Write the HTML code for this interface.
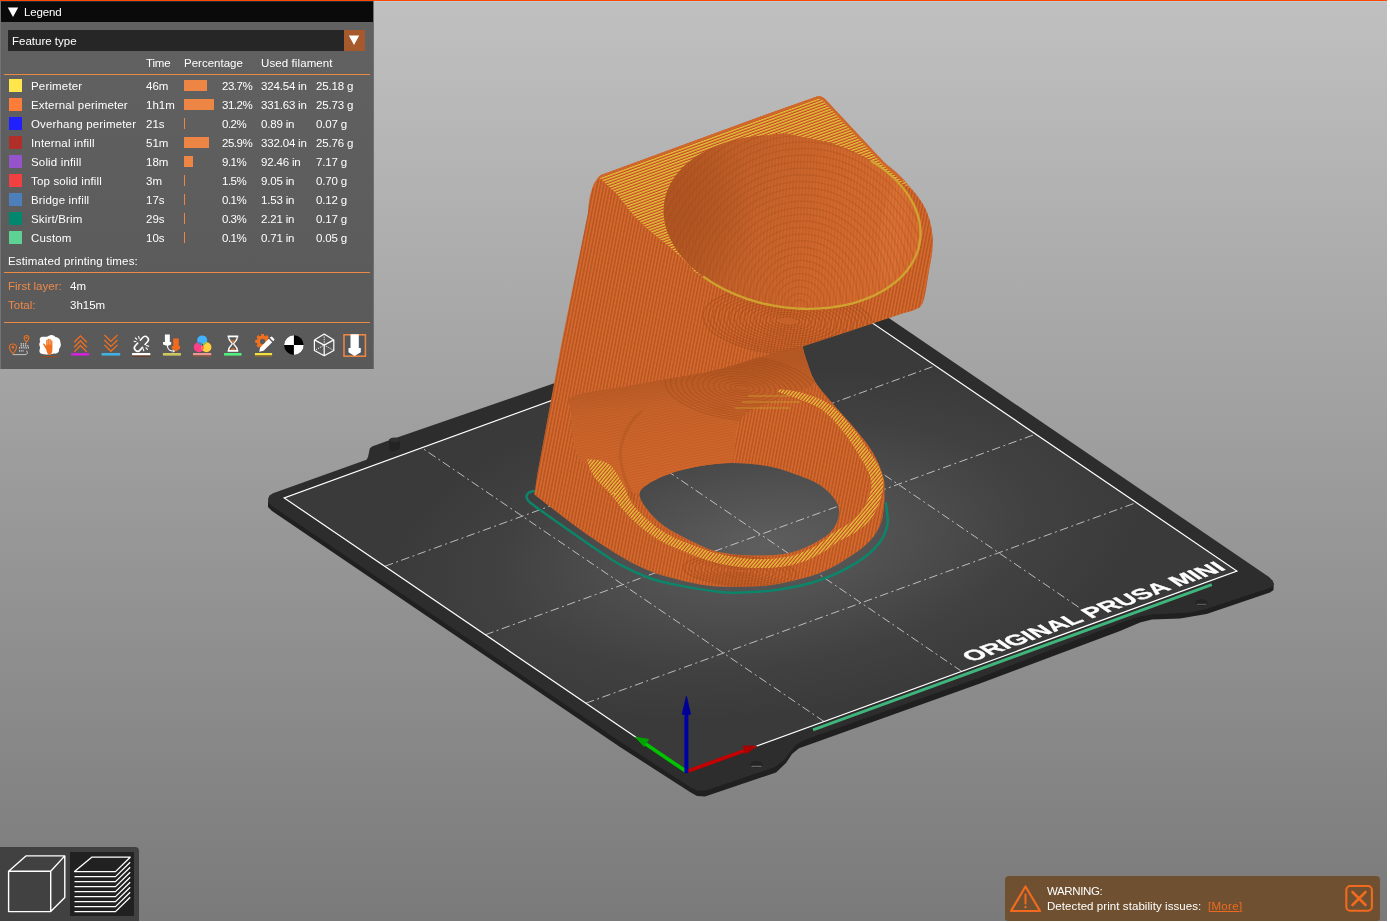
<!DOCTYPE html>
<html><head><meta charset="utf-8"><title>PrusaSlicer preview</title>
<style>
html,body{margin:0;padding:0;background:#fff;}
body{width:1390px;height:922px;overflow:hidden;position:relative;font-family:"Liberation Sans",sans-serif;font-size:12px;color:#fff;}
#canvas{position:absolute;left:0;top:0;width:1387px;height:921px;overflow:hidden;background:linear-gradient(to bottom,#c0c0c0 0%,#7a7a7a 100%);}
#topbar{position:absolute;left:0;top:0;width:1387px;height:1px;background:#ff4800;}
#topbar2{position:absolute;left:374px;top:1px;width:1013px;height:1px;background:#c3ccd2;}
svg{position:absolute;left:0;top:0;}

#legend{position:absolute;left:0;top:1px;width:374px;height:368px;background:linear-gradient(to bottom,#626262,#595959);box-sizing:border-box;border-left:1px solid #72727c;border-right:1px solid #6e6e74;}
#legend .t{position:absolute;white-space:nowrap;line-height:14px;font-size:11.5px;will-change:transform;}
#legend .l{letter-spacing:0.16px;}
#legend .p{letter-spacing:-0.5px;}
#ltitle{position:absolute;left:0;top:0;width:372px;height:21px;background:#0a0a0a;border-top:1px solid #1c2a36;box-sizing:border-box;}
#combo{position:absolute;left:7px;top:29px;width:336px;height:21px;background:#262626;}
#combobtn{position:absolute;left:343px;top:29px;width:21px;height:21px;background:#a5592c;}
.sep{position:absolute;left:3px;width:366px;height:1px;background:#ec8a45;}
.sw{position:absolute;left:8px;width:13px;height:13px;}
.bar{position:absolute;left:183px;height:11px;background:#ed8545;}
.o{color:#ed8a4a;}
#legend .n{letter-spacing:-0.18px;}


#views{position:absolute;left:0;top:847px;width:139px;height:75px;background:#414141;border-top-right-radius:4px;}
#viewsel{position:absolute;left:70px;top:5px;width:64px;height:64px;background:#212121;}
#warn{position:absolute;left:1005px;top:876px;width:375px;height:44.5px;background:#6f5132;border-radius:4px 4px 3px 3px;}
#warn .t{position:absolute;white-space:nowrap;line-height:14px;font-size:11.5px;will-change:transform;}

</style></head><body>
<div id="canvas">
<svg width="1387" height="921" viewBox="0 0 1387 921">
<defs>
<radialGradient id="bedg" gradientUnits="userSpaceOnUse" cx="0" cy="0" r="1" gradientTransform="matrix(330,-120,-190,-130,765,545)">
<stop offset="0" stop-color="#5e5e5e"/><stop offset="0.35" stop-color="#505050"/><stop offset="0.7" stop-color="#414141"/><stop offset="1" stop-color="#3a3a3a"/>
</radialGradient>
<linearGradient id="bowlg" gradientUnits="userSpaceOnUse" x1="665" y1="200" x2="920" y2="250">
<stop offset="0" stop-color="#b85a25"/><stop offset="0.3" stop-color="#c6622a"/><stop offset="0.75" stop-color="#d66b2f"/><stop offset="1" stop-color="#dc7033"/>
</linearGradient>
<linearGradient id="wallg" gradientUnits="userSpaceOnUse" x1="540" y1="350" x2="700" y2="380">
<stop offset="0" stop-color="#d96c2d"/><stop offset="1" stop-color="#d0672b"/>
</linearGradient>
<pattern id="vstripe" width="3.2" height="8" patternUnits="userSpaceOnUse" patternTransform="rotate(11)"><rect x="0" width="1.5" height="8" fill="#a9501f" opacity="0.72"/></pattern>
<pattern id="cstripe" width="8" height="2.6" patternUnits="userSpaceOnUse" patternTransform="rotate(-12)"><rect y="0" width="8" height="1.2" fill="#a9501f" opacity="0.4"/></pattern>
<pattern id="bstripe" width="3.2" height="8" patternUnits="userSpaceOnUse" patternTransform="rotate(4)"><rect x="0" width="1.4" height="8" fill="#a04c1c" opacity="0.28"/></pattern>
<pattern id="hatch" width="6" height="2.7" patternUnits="userSpaceOnUse" patternTransform="rotate(-20)"><rect width="6" height="2.7" fill="#d96a28"/><rect y="0" width="6" height="1.25" fill="#dccb38"/><rect y="1.9" width="6" height="0.8" fill="#c63a2c"/></pattern>
<pattern id="hatch2" width="6" height="2.7" patternUnits="userSpaceOnUse" patternTransform="rotate(-50)"><rect width="6" height="2.7" fill="#d96a28"/><rect y="0" width="6" height="1.3" fill="#e0d03a"/><rect y="1.9" width="6" height="0.8" fill="#c63a2c"/></pattern>
<linearGradient id="concg" gradientUnits="userSpaceOnUse" x1="690" y1="370" x2="700" y2="470">
<stop offset="0" stop-color="#b55823"/><stop offset="0.35" stop-color="#c8632a"/><stop offset="1" stop-color="#d2672c"/></linearGradient>
<radialGradient id="bdark"><stop offset="0" stop-color="#a04c1c" stop-opacity="0.45"/><stop offset="0.6" stop-color="#a04c1c" stop-opacity="0.25"/><stop offset="1" stop-color="#a04c1c" stop-opacity="0"/></radialGradient>
</defs>
<path d="M268.0,501.0 L268.0,507.0 L272.0,511.0 L620.0,747.0 L690.0,792.0 L697.0,796.0 L705.0,796.5 L776.0,772.5 L786.0,763.0 L792.0,754.0 L799.0,748.3 L980.0,683.4 L1120.0,631.0 L1140.0,622.5 L1152.0,619.5 L1180.0,618.4 L1206.6,614.0 L1270.0,592.5 L1273.5,590.0 L1273.7,583.0 L1000.0,560.0 L600.0,700.0Z" fill="#202020"/>
<path d="M268.5,503.0 L268.0,499.0 L269.5,495.5 L273.0,493.2 L366.5,459.8 L368.0,457.0 L369.8,448.6 L372.0,446.6 L388.5,440.4 L553.5,383.5 L835.2,281.4 L1269.0,577.0 L1273.0,581.0 L1273.7,584.5 L1272.0,587.0 L1268.0,588.5 L1206.0,609.0 L1190.0,612.5 L1152.0,614.5 L1140.0,616.5 L1120.0,623.0 L980.0,677.6 L805.0,739.7 L797.0,744.0 L791.0,751.0 L784.0,760.0 L775.0,767.0 L706.0,790.5 L698.0,790.8 L690.0,787.0 L620.0,741.5 L272.0,506.0Z" fill="#2d2d2d"/>
<path d="M389.2,443.9 L389.2,439.5 Q394.5,436.3 400,439.7 L400,448.2 Q394.5,452.6 389.2,450.4 Z" fill="#242424"/>
<ellipse cx="394.6" cy="439.9" rx="5.4" ry="2.3" fill="#2f2f2f"/>
<ellipse cx="756.4" cy="764.4" rx="6.3" ry="3.4" fill="#242424"/><path d="M751.5,766.3 H761.5" stroke="#777" stroke-width="1"/>
<ellipse cx="1201.5" cy="602.5" rx="6" ry="3.3" fill="#242424"/><path d="M1197,604.3 H1206" stroke="#666" stroke-width="1"/>
<path d="M686.4,771.6 L1236.9,571.0 L834.7,297.3 L284.2,497.9Z" fill="url(#bedg)"/>
<path d="M824.0,721.5 L421.8,447.8 M585.9,703.2 L1136.4,502.6 M961.6,671.3 L559.5,397.6 M485.3,634.8 L1035.8,434.1 M1078.7,607.2 L697.1,347.5 M384.8,566.3 L935.3,365.7" stroke="#d8d8d8" stroke-width="1" stroke-dasharray="8.6 3.4 2 3.4" fill="none" opacity="0.8"/>
<path d="M686.4,771.6 L1236.9,571.0 L834.7,297.3 L284.2,497.9Z" fill="none" stroke="#ffffff" stroke-width="1.2"/>
<path d="M813.0,729.9 L1211.8,584.6" stroke="#3fb57c" stroke-width="3.1"/>
<g style="filter:blur(0.35px)"><text transform="matrix(3.0583,-1.1144,2.2791,1.5510,971.5,662.3)" font-family="Liberation Sans, sans-serif" font-weight="bold" font-size="7.6" fill="#ffffff" stroke="#ffffff" stroke-width="0.14" >ORIGINAL PRUSA MINI</text></g>
<path d="M534.0,491.0 C533.2,491.3 530.2,491.7 529.0,492.6 C527.8,493.5 526.6,495.1 526.5,496.5 C526.4,497.9 527.2,499.5 528.5,501.0 C529.8,502.5 530.6,503.0 534.0,505.5 C537.4,508.0 539.2,509.4 548.9,516.2 C558.6,523.0 580.2,538.3 592.2,546.5 C604.2,554.7 611.4,559.9 621.0,565.2 C630.6,570.5 640.3,574.8 649.9,578.2 C659.5,581.6 667.9,583.2 678.7,585.4 C689.5,587.6 705.5,590.0 714.8,591.2 C724.1,592.4 723.9,592.9 734.4,592.7 C744.9,592.5 763.3,592.0 777.7,589.8 C792.1,587.6 807.8,584.3 821.0,579.7 C834.2,575.1 847.4,568.4 857.0,562.4 C866.6,556.4 873.6,549.9 878.7,543.6 C883.8,537.3 886.2,531.5 887.4,524.8 C888.6,518.1 886.2,506.8 886.0,503.2" fill="none" stroke="#0d856a" stroke-width="2.5" stroke-linecap="round"/>
<clipPath id="mclip"><path d="M534.4,494.5 L537.6,473 L562.1,340 L588,213 Q589,186 600.4,175.2 L760,116.8 L817,96.6 Q821.5,95.2 825,99 L884.3,162.4  C887.6,165.3 897.0,172.2 903.9,180.0 C910.8,187.8 920.7,198.8 925.5,208.9 C930.3,219.0 932.3,229.8 932.8,240.6 C933.3,251.4 930.1,263.4 928.4,273.8 C926.7,284.2 925.1,296.7 922.7,302.7 C920.3,308.7 917.1,308.3 914.0,310.0 C910.9,311.7 905.6,312.5 903.9,313.0 L850,331 L802.5,346.6  C803.1,348.8 804.3,354.2 806.4,360.0 C808.5,365.8 810.7,374.4 815.0,381.6 C819.3,388.8 825.7,395.4 832.4,403.3 C839.1,411.2 848.7,421.1 855.4,429.3 C862.1,437.5 868.2,444.7 872.8,452.4 C877.4,460.1 880.9,468.9 882.9,475.4 C884.9,481.9 884.4,485.8 884.5,491.6 C884.6,497.4 884.2,504.5 883.5,510.0 C882.8,515.5 882.5,519.7 880.2,524.8 C878.0,529.9 875.0,535.4 870.0,540.7 C865.0,546.0 858.1,551.3 849.9,556.6 C841.7,561.9 833.0,567.9 821.0,572.5 C809.0,577.1 791.2,581.6 777.7,584.0 C764.2,586.4 751.7,586.6 740.0,586.8 C728.3,587.0 717.8,586.6 707.6,585.4 C697.4,584.2 688.3,582.1 678.7,579.7 C669.1,577.3 659.5,574.9 649.9,571.0 C640.3,567.1 633.0,563.8 621.0,556.6 C609.0,549.4 592.1,538.1 577.7,527.7 C563.3,517.4 541.6,500.0 534.4,494.5Z M731.1,463.0 C720.3,463.1 709.5,464.5 699.4,466.2 C689.3,467.9 678.9,470.5 670.5,473.4 C662.1,476.3 654.1,480.1 648.9,483.5 C643.7,486.9 639.9,489.4 639.5,493.6 C639.1,497.8 642.5,503.1 646.5,508.5 C650.5,513.9 656.1,520.3 663.8,525.8 C671.5,531.3 683.5,537.3 692.7,541.7 C701.9,546.1 708.5,549.7 719.0,552.0 C729.5,554.3 743.8,555.6 756.0,555.6 C768.2,555.6 781.4,555.0 792.2,552.3 C803.0,549.6 814.0,543.4 821.0,539.3 C828.0,535.2 831.0,532.0 834.0,527.7 C837.0,523.4 838.8,517.9 839.0,513.3 C839.2,508.7 838.6,505.0 835.4,500.3 C832.2,495.6 827.0,489.5 820.0,485.0 C813.0,480.5 802.5,476.6 793.2,473.4 C783.9,470.1 774.6,467.2 764.3,465.5 C753.9,463.8 741.9,462.9 731.1,463.0Z" clip-rule="evenodd"/></clipPath>
<path d="M534.4,494.5 L537.6,473 L562.1,340 L588,213 Q589,186 600.4,175.2 L760,116.8 L817,96.6 Q821.5,95.2 825,99 L884.3,162.4  C887.6,165.3 897.0,172.2 903.9,180.0 C910.8,187.8 920.7,198.8 925.5,208.9 C930.3,219.0 932.3,229.8 932.8,240.6 C933.3,251.4 930.1,263.4 928.4,273.8 C926.7,284.2 925.1,296.7 922.7,302.7 C920.3,308.7 917.1,308.3 914.0,310.0 C910.9,311.7 905.6,312.5 903.9,313.0 L850,331 L802.5,346.6  C803.1,348.8 804.3,354.2 806.4,360.0 C808.5,365.8 810.7,374.4 815.0,381.6 C819.3,388.8 825.7,395.4 832.4,403.3 C839.1,411.2 848.7,421.1 855.4,429.3 C862.1,437.5 868.2,444.7 872.8,452.4 C877.4,460.1 880.9,468.9 882.9,475.4 C884.9,481.9 884.4,485.8 884.5,491.6 C884.6,497.4 884.2,504.5 883.5,510.0 C882.8,515.5 882.5,519.7 880.2,524.8 C878.0,529.9 875.0,535.4 870.0,540.7 C865.0,546.0 858.1,551.3 849.9,556.6 C841.7,561.9 833.0,567.9 821.0,572.5 C809.0,577.1 791.2,581.6 777.7,584.0 C764.2,586.4 751.7,586.6 740.0,586.8 C728.3,587.0 717.8,586.6 707.6,585.4 C697.4,584.2 688.3,582.1 678.7,579.7 C669.1,577.3 659.5,574.9 649.9,571.0 C640.3,567.1 633.0,563.8 621.0,556.6 C609.0,549.4 592.1,538.1 577.7,527.7 C563.3,517.4 541.6,500.0 534.4,494.5Z M731.1,463.0 C720.3,463.1 709.5,464.5 699.4,466.2 C689.3,467.9 678.9,470.5 670.5,473.4 C662.1,476.3 654.1,480.1 648.9,483.5 C643.7,486.9 639.9,489.4 639.5,493.6 C639.1,497.8 642.5,503.1 646.5,508.5 C650.5,513.9 656.1,520.3 663.8,525.8 C671.5,531.3 683.5,537.3 692.7,541.7 C701.9,546.1 708.5,549.7 719.0,552.0 C729.5,554.3 743.8,555.6 756.0,555.6 C768.2,555.6 781.4,555.0 792.2,552.3 C803.0,549.6 814.0,543.4 821.0,539.3 C828.0,535.2 831.0,532.0 834.0,527.7 C837.0,523.4 838.8,517.9 839.0,513.3 C839.2,508.7 838.6,505.0 835.4,500.3 C832.2,495.6 827.0,489.5 820.0,485.0 C813.0,480.5 802.5,476.6 793.2,473.4 C783.9,470.1 774.6,467.2 764.3,465.5 C753.9,463.8 741.9,462.9 731.1,463.0Z" fill="#d6682d" fill-rule="evenodd"/>
<g clip-path="url(#mclip)">
<rect x="520" y="90" width="430" height="510" fill="url(#vstripe)"/>
<path d="M573.2,396.3 C582.5,392.0 608.1,389.6 626.6,386.2 C645.1,382.8 668.7,379.0 684.3,376.1 C699.9,373.2 707.8,372.1 720.4,368.9 C733.0,365.7 746.4,360.7 760.0,357.0 C773.6,353.3 794.3,346.3 802.0,346.8 C809.7,347.3 804.2,354.2 806.4,360.0 C808.6,365.8 816.1,376.3 815.0,381.6 C813.9,386.9 806.7,388.9 800.0,392.0 C793.3,395.1 785.0,395.3 775.0,400.0 C765.0,404.7 747.3,409.5 740.0,420.0 C732.7,430.5 737.8,455.3 731.0,463.0 C724.2,470.7 709.5,464.5 699.4,466.2 C689.3,467.9 678.9,470.5 670.5,473.4 C662.1,476.3 654.1,480.1 648.9,483.5 C643.7,486.9 644.3,493.2 639.5,493.6 C634.7,494.0 626.6,490.3 620.0,486.0 C613.4,481.7 606.1,471.9 600.0,468.0 C593.9,464.1 587.8,467.2 583.3,462.7 C578.8,458.2 575.0,449.4 573.0,441.0 C571.0,432.6 571.0,419.4 571.0,412.0 C571.0,404.6 563.9,400.6 573.2,396.3Z" fill="url(#concg)"/>
<path d="M573.2,396.3 C582.5,392.0 608.1,389.6 626.6,386.2 C645.1,382.8 668.7,379.0 684.3,376.1 C699.9,373.2 707.8,372.1 720.4,368.9 C733.0,365.7 746.4,360.7 760.0,357.0 C773.6,353.3 794.3,346.3 802.0,346.8 C809.7,347.3 804.2,354.2 806.4,360.0 C808.6,365.8 816.1,376.3 815.0,381.6 C813.9,386.9 806.7,388.9 800.0,392.0 C793.3,395.1 785.0,395.3 775.0,400.0 C765.0,404.7 747.3,409.5 740.0,420.0 C732.7,430.5 737.8,455.3 731.0,463.0 C724.2,470.7 709.5,464.5 699.4,466.2 C689.3,467.9 678.9,470.5 670.5,473.4 C662.1,476.3 654.1,480.1 648.9,483.5 C643.7,486.9 644.3,493.2 639.5,493.6 C634.7,494.0 626.6,490.3 620.0,486.0 C613.4,481.7 606.1,471.9 600.0,468.0 C593.9,464.1 587.8,467.2 583.3,462.7 C578.8,458.2 575.0,449.4 573.0,441.0 C571.0,432.6 571.0,419.4 571.0,412.0 C571.0,404.6 563.9,400.6 573.2,396.3Z" fill="url(#cstripe)" opacity="0.8"/>
<path d="M641.2,411.6 C630,420 621,438 620.3,452.2 C620,465 625,481 634.2,499.8" fill="none" stroke="#a04e1d" stroke-width="3" opacity="0.3" stroke-linecap="round"/>
<clipPath id="underclip"><path d="M705,277.5 L640,300 L600,392 L626.6,386.2 L684.3,376.1 L720.4,368.9 L760,357 L802,346.8 L850,331 L903.9,313 L935,300 L935,200 L921,223 L917,255 L901,280 L863,300 L801,309.5 L743,299.5 Z"/></clipPath>
<g clip-path="url(#underclip)"><g fill="none" stroke="#9c4818" stroke-width="1.25" opacity="0.42"><ellipse cx="788" cy="321" rx="7.0" ry="2.2" transform="rotate(4 788 321)"/><ellipse cx="788" cy="321" rx="12.2" ry="4.3" transform="rotate(4 788 321)"/><ellipse cx="788" cy="321" rx="17.4" ry="6.4" transform="rotate(4 788 321)"/><ellipse cx="788" cy="321" rx="22.6" ry="8.5" transform="rotate(4 788 321)"/><ellipse cx="788" cy="321" rx="27.8" ry="10.6" transform="rotate(4 788 321)"/><ellipse cx="788" cy="321" rx="33.0" ry="12.7" transform="rotate(4 788 321)"/><ellipse cx="788" cy="321" rx="38.2" ry="14.8" transform="rotate(4 788 321)"/><ellipse cx="788" cy="321" rx="43.4" ry="16.9" transform="rotate(4 788 321)"/><ellipse cx="788" cy="321" rx="48.6" ry="19.0" transform="rotate(4 788 321)"/><ellipse cx="788" cy="321" rx="53.8" ry="21.1" transform="rotate(4 788 321)"/><ellipse cx="788" cy="321" rx="59.0" ry="23.2" transform="rotate(4 788 321)"/><ellipse cx="788" cy="321" rx="64.2" ry="25.3" transform="rotate(4 788 321)"/><ellipse cx="788" cy="321" rx="69.4" ry="27.4" transform="rotate(4 788 321)"/><ellipse cx="788" cy="321" rx="74.6" ry="29.5" transform="rotate(4 788 321)"/><ellipse cx="788" cy="321" rx="79.8" ry="31.6" transform="rotate(4 788 321)"/><ellipse cx="788" cy="321" rx="85.0" ry="33.7" transform="rotate(4 788 321)"/></g></g>
<ellipse cx="788" cy="321" rx="9" ry="3" fill="#c66229" transform="rotate(4 788 321)"/>
<clipPath id="concclip"><path d="M573.2,396.3 C582.5,392.0 608.1,389.6 626.6,386.2 C645.1,382.8 668.7,379.0 684.3,376.1 C699.9,373.2 707.8,372.1 720.4,368.9 C733.0,365.7 746.4,360.7 760.0,357.0 C773.6,353.3 794.3,346.3 802.0,346.8 C809.7,347.3 804.2,354.2 806.4,360.0 C808.6,365.8 816.1,376.3 815.0,381.6 C813.9,386.9 806.7,388.9 800.0,392.0 C793.3,395.1 785.0,395.3 775.0,400.0 C765.0,404.7 747.3,409.5 740.0,420.0 C732.7,430.5 737.8,455.3 731.0,463.0 C724.2,470.7 709.5,464.5 699.4,466.2 C689.3,467.9 678.9,470.5 670.5,473.4 C662.1,476.3 654.1,480.1 648.9,483.5 C643.7,486.9 644.3,493.2 639.5,493.6 C634.7,494.0 626.6,490.3 620.0,486.0 C613.4,481.7 606.1,471.9 600.0,468.0 C593.9,464.1 587.8,467.2 583.3,462.7 C578.8,458.2 575.0,449.4 573.0,441.0 C571.0,432.6 571.0,419.4 571.0,412.0 C571.0,404.6 563.9,400.6 573.2,396.3Z"/></clipPath>
<g clip-path="url(#concclip)"><g fill="none" stroke="#9c4818" stroke-width="1.25" opacity="0.38"><ellipse cx="742" cy="388" rx="7.0" ry="2.4" transform="rotate(6 742 388)"/><ellipse cx="742" cy="388" rx="12.4" ry="4.7" transform="rotate(6 742 388)"/><ellipse cx="742" cy="388" rx="17.8" ry="7.0" transform="rotate(6 742 388)"/><ellipse cx="742" cy="388" rx="23.2" ry="9.3" transform="rotate(6 742 388)"/><ellipse cx="742" cy="388" rx="28.6" ry="11.6" transform="rotate(6 742 388)"/><ellipse cx="742" cy="388" rx="34.0" ry="13.9" transform="rotate(6 742 388)"/><ellipse cx="742" cy="388" rx="39.4" ry="16.2" transform="rotate(6 742 388)"/><ellipse cx="742" cy="388" rx="44.8" ry="18.5" transform="rotate(6 742 388)"/><ellipse cx="742" cy="388" rx="50.2" ry="20.8" transform="rotate(6 742 388)"/><ellipse cx="742" cy="388" rx="55.6" ry="23.1" transform="rotate(6 742 388)"/><ellipse cx="742" cy="388" rx="61.0" ry="25.4" transform="rotate(6 742 388)"/><ellipse cx="742" cy="388" rx="66.4" ry="27.7" transform="rotate(6 742 388)"/><ellipse cx="742" cy="388" rx="71.8" ry="30.0" transform="rotate(6 742 388)"/><ellipse cx="742" cy="388" rx="77.2" ry="32.3" transform="rotate(6 742 388)"/></g></g>
<clipPath id="lowclip"><path d="M600,520 L900,520 L900,600 L600,600 Z"/></clipPath>
<g clip-path="url(#lowclip)"><g fill="none" stroke="#9c4818" stroke-width="1.25" opacity="0.4"><ellipse cx="740" cy="571" rx="7.0" ry="1.6" transform="rotate(4 740 571)"/><ellipse cx="740" cy="571" rx="12.5" ry="3.1" transform="rotate(4 740 571)"/><ellipse cx="740" cy="571" rx="18.0" ry="4.6" transform="rotate(4 740 571)"/><ellipse cx="740" cy="571" rx="23.5" ry="6.1" transform="rotate(4 740 571)"/><ellipse cx="740" cy="571" rx="29.0" ry="7.6" transform="rotate(4 740 571)"/><ellipse cx="740" cy="571" rx="34.5" ry="9.1" transform="rotate(4 740 571)"/><ellipse cx="740" cy="571" rx="40.0" ry="10.6" transform="rotate(4 740 571)"/><ellipse cx="740" cy="571" rx="45.5" ry="12.1" transform="rotate(4 740 571)"/><ellipse cx="740" cy="571" rx="51.0" ry="13.6" transform="rotate(4 740 571)"/><ellipse cx="740" cy="571" rx="56.5" ry="15.1" transform="rotate(4 740 571)"/></g></g>
<path d="M600,178 L601.5,175.6 L760,116.8 L817,96.6 Q821.5,95.2 825,99 L884.3,162.4 L903.9,180 L911,189 L899.2,181.5 L873.1,164.1 L833.2,143.3 L784.6,132.9 L743,138.1 L694.4,157.2 L672,183 L665.9,205.8 L673.6,240.5 L694.4,271.7 L705,277.5 L686,262.1 L668.6,245.8 L651.2,231.9 L633.8,215.7 L616.4,193.6 Z" fill="url(#hatch)"/>
<path d="M592,188 Q591,178.5 600.4,175.2 L760,116.8 L817,96.6 Q821.5,95.2 825,99 L884.3,162.4 L903.9,180" fill="none" stroke="#d0672b" stroke-width="5"/>
<path d="M919.9,241.8 C919.3,245.5 918.4,249.1 917.1,252.7 C915.8,256.2 914.1,259.7 912.1,263.0 C910.1,266.3 907.8,269.6 905.1,272.6 C902.5,275.7 899.5,278.7 896.2,281.4 C892.9,284.2 889.3,286.8 885.5,289.2 C881.7,291.6 877.5,293.8 873.2,295.8 C868.9,297.8 864.3,299.6 859.5,301.2 C854.7,302.7 849.7,304.1 844.6,305.1 C839.5,306.2 834.3,307.1 828.9,307.7 C823.5,308.3 818.0,308.7 812.5,308.8 C807.0,309.0 801.4,308.8 795.8,308.5 C790.2,308.1 784.6,307.5 779.0,306.6 C773.4,305.7 767.9,304.6 762.4,303.3 C757.0,302.0 751.6,300.4 746.4,298.6 C741.2,296.8 736.0,294.8 731.1,292.6 C726.2,290.4 721.4,288.0 716.9,285.4 C712.3,282.8 708.0,280.0 703.9,277.1 C699.9,274.1 696.0,271.0 692.5,267.8 C689.0,264.6 685.7,261.2 682.8,257.8 C679.8,254.4 677.2,250.8 674.9,247.2 C672.6,243.5 670.6,239.8 669.0,236.1 C667.4,232.4 666.2,228.6 665.3,224.8 C664.4,221.0 663.9,217.2 663.7,213.4 C663.5,209.7 663.8,205.9 664.3,202.2 C664.9,198.5 665.8,194.9 667.1,191.3 C668.4,187.8 670.1,184.3 672.1,181.0 C674.1,177.7 676.4,174.4 679.1,171.4 C681.7,168.3 684.7,165.3 688.0,162.6 C691.3,159.8 694.9,157.2 698.7,154.8 C702.5,152.4 706.7,150.2 711.0,148.2 C715.3,146.2 719.9,144.4 724.7,142.8 C729.5,141.3 734.5,139.9 739.6,138.9 C744.7,137.8 749.9,136.9 755.3,136.3 C760.7,135.7 766.2,135.3 771.7,135.2 C777.2,135.0 782.8,135.2 788.4,135.5 C794.0,135.9 799.6,136.5 805.2,137.4 C810.8,138.3 816.3,139.4 821.8,140.7 C827.2,142.0 832.6,143.6 837.8,145.4 C843.0,147.2 848.2,149.2 853.1,151.4 C858.0,153.6 862.8,156.0 867.3,158.6 C871.9,161.2 876.2,164.0 880.3,166.9 C884.3,169.9 888.2,173.0 891.7,176.2 C895.2,179.4 898.5,182.8 901.4,186.2 C904.4,189.6 907.0,193.2 909.3,196.8 C911.6,200.5 913.6,204.2 915.2,207.9 C916.8,211.6 918.0,215.4 918.9,219.2 C919.8,223.0 920.3,226.8 920.5,230.6 C920.7,234.3 920.4,238.1 919.9,241.8Z" fill="url(#bowlg)"/>
<clipPath id="bowlclip"><path d="M919.9,241.8 C919.3,245.5 918.4,249.1 917.1,252.7 C915.8,256.2 914.1,259.7 912.1,263.0 C910.1,266.3 907.8,269.6 905.1,272.6 C902.5,275.7 899.5,278.7 896.2,281.4 C892.9,284.2 889.3,286.8 885.5,289.2 C881.7,291.6 877.5,293.8 873.2,295.8 C868.9,297.8 864.3,299.6 859.5,301.2 C854.7,302.7 849.7,304.1 844.6,305.1 C839.5,306.2 834.3,307.1 828.9,307.7 C823.5,308.3 818.0,308.7 812.5,308.8 C807.0,309.0 801.4,308.8 795.8,308.5 C790.2,308.1 784.6,307.5 779.0,306.6 C773.4,305.7 767.9,304.6 762.4,303.3 C757.0,302.0 751.6,300.4 746.4,298.6 C741.2,296.8 736.0,294.8 731.1,292.6 C726.2,290.4 721.4,288.0 716.9,285.4 C712.3,282.8 708.0,280.0 703.9,277.1 C699.9,274.1 696.0,271.0 692.5,267.8 C689.0,264.6 685.7,261.2 682.8,257.8 C679.8,254.4 677.2,250.8 674.9,247.2 C672.6,243.5 670.6,239.8 669.0,236.1 C667.4,232.4 666.2,228.6 665.3,224.8 C664.4,221.0 663.9,217.2 663.7,213.4 C663.5,209.7 663.8,205.9 664.3,202.2 C664.9,198.5 665.8,194.9 667.1,191.3 C668.4,187.8 670.1,184.3 672.1,181.0 C674.1,177.7 676.4,174.4 679.1,171.4 C681.7,168.3 684.7,165.3 688.0,162.6 C691.3,159.8 694.9,157.2 698.7,154.8 C702.5,152.4 706.7,150.2 711.0,148.2 C715.3,146.2 719.9,144.4 724.7,142.8 C729.5,141.3 734.5,139.9 739.6,138.9 C744.7,137.8 749.9,136.9 755.3,136.3 C760.7,135.7 766.2,135.3 771.7,135.2 C777.2,135.0 782.8,135.2 788.4,135.5 C794.0,135.9 799.6,136.5 805.2,137.4 C810.8,138.3 816.3,139.4 821.8,140.7 C827.2,142.0 832.6,143.6 837.8,145.4 C843.0,147.2 848.2,149.2 853.1,151.4 C858.0,153.6 862.8,156.0 867.3,158.6 C871.9,161.2 876.2,164.0 880.3,166.9 C884.3,169.9 888.2,173.0 891.7,176.2 C895.2,179.4 898.5,182.8 901.4,186.2 C904.4,189.6 907.0,193.2 909.3,196.8 C911.6,200.5 913.6,204.2 915.2,207.9 C916.8,211.6 918.0,215.4 918.9,219.2 C919.8,223.0 920.3,226.8 920.5,230.6 C920.7,234.3 920.4,238.1 919.9,241.8Z"/></clipPath>
<g clip-path="url(#bowlclip)"><ellipse cx="893" cy="232" rx="13" ry="50" fill="#e0753a" opacity="0.45" transform="rotate(8 893 232)"/><ellipse cx="685" cy="215" rx="70" ry="95" fill="url(#bdark)"/><rect x="660" y="120" width="270" height="200" fill="url(#bstripe)"/><g fill="none" stroke="#9c4818" stroke-width="1.3" opacity="0.25"><ellipse cx="800" cy="306" rx="8.0" ry="6.0" transform="rotate(6 800 306)"/><ellipse cx="800" cy="306" rx="13.6" ry="12.6" transform="rotate(6 800 306)"/><ellipse cx="800" cy="306" rx="19.2" ry="19.2" transform="rotate(6 800 306)"/><ellipse cx="800" cy="306" rx="24.8" ry="25.8" transform="rotate(6 800 306)"/><ellipse cx="800" cy="306" rx="30.4" ry="32.4" transform="rotate(6 800 306)"/><ellipse cx="800" cy="306" rx="36.0" ry="39.0" transform="rotate(6 800 306)"/><ellipse cx="800" cy="306" rx="41.6" ry="45.6" transform="rotate(6 800 306)"/><ellipse cx="800" cy="306" rx="47.2" ry="52.2" transform="rotate(6 800 306)"/><ellipse cx="800" cy="306" rx="52.8" ry="58.8" transform="rotate(6 800 306)"/><ellipse cx="800" cy="306" rx="58.4" ry="65.4" transform="rotate(6 800 306)"/><ellipse cx="800" cy="306" rx="64.0" ry="72.0" transform="rotate(6 800 306)"/><ellipse cx="800" cy="306" rx="69.6" ry="78.6" transform="rotate(6 800 306)"/><ellipse cx="800" cy="306" rx="75.2" ry="85.2" transform="rotate(6 800 306)"/><ellipse cx="800" cy="306" rx="80.8" ry="91.8" transform="rotate(6 800 306)"/><ellipse cx="800" cy="306" rx="86.4" ry="98.4" transform="rotate(6 800 306)"/><ellipse cx="800" cy="306" rx="92.0" ry="105.0" transform="rotate(6 800 306)"/><ellipse cx="800" cy="306" rx="97.6" ry="111.6" transform="rotate(6 800 306)"/><ellipse cx="800" cy="306" rx="103.2" ry="118.2" transform="rotate(6 800 306)"/><ellipse cx="800" cy="306" rx="108.8" ry="124.8" transform="rotate(6 800 306)"/><ellipse cx="800" cy="306" rx="114.4" ry="131.4" transform="rotate(6 800 306)"/><ellipse cx="800" cy="306" rx="120.0" ry="138.0" transform="rotate(6 800 306)"/><ellipse cx="800" cy="306" rx="125.6" ry="144.6" transform="rotate(6 800 306)"/><ellipse cx="800" cy="306" rx="131.2" ry="151.2" transform="rotate(6 800 306)"/><ellipse cx="800" cy="306" rx="136.8" ry="157.8" transform="rotate(6 800 306)"/><ellipse cx="800" cy="306" rx="142.4" ry="164.4" transform="rotate(6 800 306)"/><ellipse cx="800" cy="306" rx="148.0" ry="171.0" transform="rotate(6 800 306)"/><ellipse cx="800" cy="306" rx="153.6" ry="177.6" transform="rotate(6 800 306)"/><ellipse cx="800" cy="306" rx="159.2" ry="184.2" transform="rotate(6 800 306)"/><ellipse cx="800" cy="306" rx="164.8" ry="190.8" transform="rotate(6 800 306)"/><ellipse cx="800" cy="306" rx="170.4" ry="197.4" transform="rotate(6 800 306)"/></g></g>
<path d="M870.9,160.7 C872.0,161.5 875.4,163.6 877.6,165.0 C879.8,166.5 881.9,168.0 883.9,169.6 C885.9,171.2 887.9,172.8 889.7,174.4 C891.6,176.1 893.4,177.7 895.2,179.4 C896.9,181.1 898.5,182.9 900.1,184.6 C901.7,186.4 903.2,188.2 904.6,190.0 C906.0,191.9 907.3,193.7 908.5,195.6 C909.7,197.4 910.9,199.3 911.9,201.2 C912.9,203.1 913.9,205.0 914.8,207.0 C915.6,208.9 916.4,210.8 917.1,212.8 C917.7,214.7 918.3,216.7 918.8,218.6 C919.3,220.6 919.6,222.6 919.9,224.5 C920.2,226.5 920.4,228.4 920.5,230.4 C920.6,232.3 920.6,234.3 920.5,236.2 C920.4,238.1 920.2,240.1 919.8,242.0 C919.5,243.9 919.1,245.8 918.7,247.6 C918.2,249.5 917.6,251.4 916.9,253.2 C916.2,255.0 915.4,256.8 914.5,258.6 C913.7,260.4 912.7,262.1 911.6,263.8 C910.6,265.5 909.4,267.2 908.2,268.9 C906.9,270.5 905.6,272.1 904.2,273.7 C902.8,275.3 901.3,276.8 899.7,278.3 C898.1,279.8 896.5,281.3 894.7,282.7 C893.0,284.1 891.2,285.4 889.3,286.7 C887.4,288.0 885.4,289.3 883.4,290.5 C881.3,291.7 879.2,292.9 877.0,293.9 C874.9,295.0 872.6,296.1 870.3,297.1 C868.0,298.1 865.7,299.0 863.3,299.9 C860.9,300.7 858.4,301.5 855.9,302.3 C853.4,303.0 850.8,303.7 848.2,304.3 C845.6,305.0 842.9,305.5 840.3,306.0 C837.6,306.5 834.9,307.0 832.1,307.3 C829.4,307.7 826.6,308.0 823.8,308.2 C821.0,308.5 818.1,308.6 815.3,308.7 C812.4,308.9 809.6,308.9 806.7,308.9 C803.8,308.8 800.9,308.7 798.0,308.6 C795.1,308.4 792.2,308.2 789.4,307.9 C786.5,307.6 783.6,307.3 780.7,306.8 C777.8,306.4 774.9,305.9 772.1,305.4 C769.2,304.8 766.4,304.2 763.5,303.6 C760.7,302.9 757.9,302.1 755.1,301.3 C752.4,300.5 749.6,299.7 746.9,298.8 C744.2,297.9 741.5,296.9 738.9,295.8 C736.2,294.8 733.6,293.7 731.1,292.6 C728.6,291.4 726.1,290.2 723.6,289.0 C721.2,287.8 718.8,286.5 716.4,285.1 C714.1,283.8 711.8,282.4 709.6,280.9 C707.4,279.5 704.2,277.2 703.1,276.5" fill="none" stroke="#d0aa30" stroke-width="2.3" opacity="0.9"/>
<path d="M587.8,462.6 C588.6,465.7 591.3,473.1 594.9,478.1 C598.6,483.1 604.7,487.3 609.5,492.7 C614.3,498.1 618.2,504.4 623.7,510.5 C629.3,516.5 636.3,523.6 642.8,528.8 C649.3,534.1 655.3,537.9 662.8,542.0 C670.4,546.0 679.7,549.8 688.4,553.2 C697.0,556.6 705.5,560.0 714.9,562.4 C724.3,564.7 734.5,566.6 744.6,567.5 C754.7,568.3 765.9,568.3 775.4,567.5 C784.9,566.6 793.4,564.9 801.4,562.3 C809.4,559.7 817.0,555.4 823.3,551.9 C829.5,548.4 833.4,544.4 838.7,541.2 C844.0,538.0 850.2,535.8 855.1,532.5 C860.1,529.2 864.8,525.7 868.5,521.5 C872.2,517.4 875.1,512.4 877.4,507.6 C879.7,502.8 881.5,497.5 882.4,492.8 C883.3,488.0 883.6,483.7 882.9,479.1 C882.3,474.6 880.3,469.5 878.5,465.5 C876.6,461.5 875.8,461.1 871.6,455.0 C867.5,448.9 860.7,437.4 853.6,428.9 C846.5,420.4 837.9,410.0 829.3,404.0 C820.6,397.9 809.9,395.1 801.8,392.7 C793.6,390.3 784.0,389.6 780.4,389.5 C776.7,389.5 776.5,390.8 779.6,392.5 C782.8,394.1 792.0,396.2 799.4,399.3 C806.8,402.4 816.2,405.3 823.9,411.2 C831.7,417.2 839.4,426.8 845.8,435.1 C852.2,443.4 858.8,455.1 862.4,461.0 C866.0,466.9 866.1,467.2 867.5,470.5 C869.0,473.8 870.6,477.6 871.1,480.9 C871.6,484.2 871.4,486.8 870.6,490.4 C869.9,494.0 868.4,498.5 866.6,502.4 C864.7,506.3 862.4,510.1 859.5,513.7 C856.5,517.2 853.2,520.3 848.9,523.5 C844.5,526.7 838.3,529.4 833.3,532.8 C828.3,536.2 824.5,540.6 818.7,544.1 C813.0,547.6 806.0,551.3 798.6,553.7 C791.2,556.1 783.5,557.7 774.6,558.5 C765.7,559.3 755.0,559.3 745.4,558.5 C735.8,557.7 726.1,555.9 717.1,553.6 C708.2,551.4 700.0,548.1 691.6,544.8 C683.3,541.5 674.2,538.0 667.2,534.0 C660.1,530.1 655.0,526.3 649.2,521.2 C643.4,516.1 636.7,509.8 632.3,503.5 C627.8,497.2 626.4,489.9 622.5,483.3 C618.6,476.7 614.4,467.9 609.1,463.9 C603.7,459.9 593.8,459.6 590.2,459.4 C586.7,459.2 587.0,459.5 587.8,462.6Z" fill="url(#hatch2)" opacity="0.95"/>
<path d="M742,402 H800 M735,408 H790 M748,396 H790" stroke="#c9a42e" stroke-width="1.3" opacity="0.5"/>
</g>
<path d="M686.4,771.6 L645,743.6" stroke="#00c400" stroke-width="3.6"/>
<path d="M635.6,737.2 L648.6,739.4 L644,746.4 Z" fill="#00a400" stroke="#00a400" stroke-width="1" stroke-linejoin="round"/>
<path d="M686.4,771.6 L746,750.1" stroke="#c40000" stroke-width="3.6"/>
<path d="M756.8,746.2 L743.2,746 L746.2,753.6 Z" fill="#aa0000" stroke="#aa0000" stroke-width="1" stroke-linejoin="round"/>
<path d="M686.4,773 L686.4,712" stroke="#0000a8" stroke-width="4"/>
<path d="M686.4,696.2 L690.6,714.3 L682.2,714.3 Z" fill="#000096" stroke="#000096" stroke-width="0.8" stroke-linejoin="round"/>
</svg>
<div id="topbar"></div><div id="topbar2"></div>
<div id="legend">
<div id="ltitle"></div>
<svg width="12" height="11" style="left:6px;top:6px" viewBox="0 0 12 11"><path d="M0.8,0.6 H11.2 L6,10 Z" fill="#fff"/></svg>
<div class="t" style="left:23px;top:4px;letter-spacing:-0.13px">Legend</div>
<div id="combo"></div><div id="combobtn"></div>
<svg width="12" height="11" style="left:347px;top:34px" viewBox="0 0 12 11"><path d="M0.8,0.6 H11.2 L6,10 Z" fill="#fff"/></svg>
<div class="t" style="left:11px;top:33px">Feature type</div>
<div class="t" style="left:145px;top:55px;letter-spacing:-0.14px">Time</div>
<div class="t" style="left:183px;top:55px">Percentage</div>
<div class="t" style="left:260px;top:55px;letter-spacing:0.1px">Used filament</div>
<div class="sep" style="top:73px"></div>
<div class="sw" style="top:78px;background:#ffe64d"></div>
<div class="t l" style="left:30px;top:78px">Perimeter</div>
<div class="t" style="left:145px;top:78px">46m</div>
<div class="bar" style="top:79px;width:23px"></div>
<div class="t p" style="left:221px;top:78px">23.7%</div>
<div class="t n" style="left:260px;top:78px">324.54 in</div>
<div class="t n" style="left:315px;top:78px">25.18 g</div>
<div class="sw" style="top:97px;background:#ff7d38"></div>
<div class="t l" style="left:30px;top:97px">External perimeter</div>
<div class="t" style="left:145px;top:97px">1h1m</div>
<div class="bar" style="top:98px;width:30px"></div>
<div class="t p" style="left:221px;top:97px">31.2%</div>
<div class="t n" style="left:260px;top:97px">331.63 in</div>
<div class="t n" style="left:315px;top:97px">25.73 g</div>
<div class="sw" style="top:116px;background:#1f1fff"></div>
<div class="t l" style="left:30px;top:116px">Overhang perimeter</div>
<div class="t" style="left:145px;top:116px">21s</div>
<div class="bar" style="top:117px;width:1px"></div>
<div class="t p" style="left:221px;top:116px">0.2%</div>
<div class="t n" style="left:260px;top:116px">0.89 in</div>
<div class="t n" style="left:315px;top:116px">0.07 g</div>
<div class="sw" style="top:135px;background:#b03029"></div>
<div class="t l" style="left:30px;top:135px">Internal infill</div>
<div class="t" style="left:145px;top:135px">51m</div>
<div class="bar" style="top:136px;width:25px"></div>
<div class="t p" style="left:221px;top:135px">25.9%</div>
<div class="t n" style="left:260px;top:135px">332.04 in</div>
<div class="t n" style="left:315px;top:135px">25.76 g</div>
<div class="sw" style="top:154px;background:#9654cc"></div>
<div class="t l" style="left:30px;top:154px">Solid infill</div>
<div class="t" style="left:145px;top:154px">18m</div>
<div class="bar" style="top:155px;width:9px"></div>
<div class="t p" style="left:221px;top:154px">9.1%</div>
<div class="t n" style="left:260px;top:154px">92.46 in</div>
<div class="t n" style="left:315px;top:154px">7.17 g</div>
<div class="sw" style="top:173px;background:#f04040"></div>
<div class="t l" style="left:30px;top:173px">Top solid infill</div>
<div class="t" style="left:145px;top:173px">3m</div>
<div class="bar" style="top:174px;width:1px"></div>
<div class="t p" style="left:221px;top:173px">1.5%</div>
<div class="t n" style="left:260px;top:173px">9.05 in</div>
<div class="t n" style="left:315px;top:173px">0.70 g</div>
<div class="sw" style="top:192px;background:#4d80ba"></div>
<div class="t l" style="left:30px;top:192px">Bridge infill</div>
<div class="t" style="left:145px;top:192px">17s</div>
<div class="bar" style="top:193px;width:1px"></div>
<div class="t p" style="left:221px;top:192px">0.1%</div>
<div class="t n" style="left:260px;top:192px">1.53 in</div>
<div class="t n" style="left:315px;top:192px">0.12 g</div>
<div class="sw" style="top:211px;background:#00876e"></div>
<div class="t l" style="left:30px;top:211px">Skirt/Brim</div>
<div class="t" style="left:145px;top:211px">29s</div>
<div class="bar" style="top:212px;width:1px"></div>
<div class="t p" style="left:221px;top:211px">0.3%</div>
<div class="t n" style="left:260px;top:211px">2.21 in</div>
<div class="t n" style="left:315px;top:211px">0.17 g</div>
<div class="sw" style="top:230px;background:#5ed194"></div>
<div class="t l" style="left:30px;top:230px">Custom</div>
<div class="t" style="left:145px;top:230px">10s</div>
<div class="bar" style="top:231px;width:1px"></div>
<div class="t p" style="left:221px;top:230px">0.1%</div>
<div class="t n" style="left:260px;top:230px">0.71 in</div>
<div class="t n" style="left:315px;top:230px">0.05 g</div>
<div class="t l" style="left:7px;top:253px">Estimated printing times:</div>
<div class="sep" style="top:271px"></div>
<div class="t o" style="left:7px;top:278px">First layer:</div><div class="t" style="left:69px;top:278px">4m</div>
<div class="t o" style="left:7px;top:297px">Total:</div><div class="t" style="left:69px;top:297px">3h15m</div>
<div class="sep" style="top:321px"></div>
<svg width="372" height="368" viewBox="1 1 372 368" style="left:0;top:0">
<g fill="none" stroke="#f07020" stroke-width="1.05"><path d="M26.5,342.2 C25.1,340.4 24.1,339.3 24.1,337.9 A2.4,2.4 0 1 1 28.9,337.9 C28.9,339.3 27.9,340.4 26.5,342.2 Z"/><circle cx="26.5" cy="337.8" r="0.5" fill="#f07020"/><path d="M12.9,353.8 C10.9,351 9.3,349.5 9.3,347.5 A3.6,3.6 0 1 1 16.5,347.5 C16.5,349.5 14.9,351 12.9,353.8 Z"/><circle cx="12.9" cy="347.3" r="0.8" fill="#f07020"/></g>
<g fill="none" stroke="#e4e4e4"><path d="M12.8,354.6 H25 C27.8,354.6 28,351.8 26,350.6" opacity="0.8" stroke-width="0.95"/><path d="M20.6,343.9 H27 M20.6,345.8 H29 M19,347.8 H29 M19,350.8 H24" stroke-dasharray="1.3 0.9" stroke-width="1.3" opacity="0.95"/></g>
<path d="M40.5,337.5 C43,336 46,337.5 48.5,336 C51,334.3 54,335.2 55.5,337 C58,337.5 60.5,339 60.3,342 C61.5,345 60.5,347.5 59,349 C59.5,352 57.5,354 54,353.6 C50,355 44,354.6 40.8,353.4 C38.6,352 39.6,349.5 40.2,347.5 C38.8,345 39.2,343 40.2,341.5 C39.4,339.6 39.6,338.4 40.5,337.5 Z" fill="#fff"/>
<path d="M46.2,349.5 L43.2,344.6 C42.8,343.6 44,343.2 44.8,344.2 L46.2,346 V340.6 C46.2,339.6 47.6,339.6 47.7,340.6 V339.4 C47.8,338.4 49.2,338.4 49.3,339.4 V339.6 C49.4,338.7 50.8,338.7 50.9,339.7 V340.8 C51,340 52.3,340 52.4,341 V349 C52.4,352 51.6,354.8 49.4,354.8 C47.6,354.8 46.8,352 46.2,349.5 Z" fill="#f07020"/>
<path d="M47.7,340.4 V344.6 M49.3,339.6 V344.6 M50.9,340 V344.6" stroke="#fff" stroke-width="0.4" opacity="0.85"/>
<path d="M41,356.6 H58" stroke="#9a4a1c" stroke-width="1"/>
<path d="M74.2,342.3 L80.5,335.9 L86.8,342.3 M74.2,347.2 L80.5,340.8 L86.8,347.2 M74.2,351.9 L80.5,345.5 L86.8,351.9" fill="none" stroke="#f07020" stroke-width="1.3"/>
<rect x="71.2" y="353" width="18" height="2.6" fill="#d223dc"/>
<path d="M104.3,335 L110.9,341.4 L117.5,335 M104.3,340 L110.9,346.4 L117.5,340 M104.3,344.9 L110.9,351.3 L117.5,344.9" fill="none" stroke="#f07020" stroke-width="1.3"/>
<rect x="101.6" y="353" width="18.6" height="2.6" fill="#41b1e2"/>
<g transform="rotate(-48 141.4 343.8)" fill="none" stroke="#fff" stroke-width="1.6"><rect x="132.6" y="340.6" width="17.6" height="6.4" rx="3.2"/></g>
<path d="M137.4,340.2 L145.4,347.4" stroke="#595959" stroke-width="2.6"/>
<path d="M134,341.2 L136,341.8 M135.4,338 L136.8,339.4 M138.6,336.6 L139.2,338.4 M146.6,345.6 L148.8,346.2 M146,347.8 L147.4,349.4 M143.2,348.8 L143.8,350.8" stroke="#fff" stroke-width="1.1" stroke-linecap="round"/>
<rect x="132.1" y="353" width="18.2" height="2.4" fill="#fff"/><rect x="132.1" y="355.6" width="18.2" height="1.2" fill="#6b3a1e"/>
<path d="M164.9,334.6 H169.8 V342 H171.2 V344.4 L167.6,346 L163,344.4 V342 H164.9 Z" fill="#fff"/>
<path d="M167.3,345.5 C167.5,349.5 170,351.2 174,351" fill="none" stroke="#fff" stroke-width="1.1"/><path d="M172.8,349.6 L174.8,351 L172.8,352.2" fill="none" stroke="#fff" stroke-width="1"/>
<path d="M173.2,338.6 H178.8 V345.9 H180.1 V348.6 L176,351.4 L171.8,348.6 V345.9 H173.2 Z" fill="#f26a1c"/>
<rect x="162.9" y="353" width="18" height="2.6" fill="#cfc862"/>
<circle cx="202.2" cy="340.4" r="5" fill="#40b4ff"/><circle cx="198.8" cy="347.2" r="5" fill="#ff4088"/><circle cx="206.4" cy="347.2" r="5" fill="#ffd040"/>
<clipPath id="cB"><circle cx="202.2" cy="340.4" r="5"/></clipPath><clipPath id="cP"><circle cx="198.8" cy="347.2" r="5"/></clipPath>
<circle cx="198.8" cy="347.2" r="5" fill="#2f8fd0" clip-path="url(#cB)"/>
<circle cx="206.4" cy="347.2" r="5" fill="#7cc24a" clip-path="url(#cB)"/>
<circle cx="206.4" cy="347.2" r="5" fill="#ff7050" clip-path="url(#cP)"/>
<g clip-path="url(#cB)"><circle cx="206.4" cy="347.2" r="5" fill="#123472" clip-path="url(#cP)"/></g>
<rect x="193" y="353" width="18.2" height="2.4" fill="#e89a92"/><rect x="193" y="355.4" width="18.2" height="1.3" fill="#8a5440"/>
<path d="M227.6,336.4 H238.3 M227.6,350.9 H238.3" stroke="#fff" stroke-width="1.7"/>
<path d="M228.6,337 C228.6,341.5 232.2,342 232.2,343.7 C232.2,345.4 228.6,346 228.6,350.4 M237.3,337 C237.3,341.5 233.7,342 233.7,343.7 C233.7,345.4 237.3,346 237.3,350.4" fill="none" stroke="#fff" stroke-width="1.3"/>
<path d="M230.2,340.6 H235.7 L233,342.6 Z" fill="#f07020"/><path d="M230.4,349.8 C231.4,347.6 234.6,347.6 235.6,349.8 Z" fill="#f07020"/>
<rect x="224.1" y="353" width="17.4" height="2.6" fill="#50f080"/>
<circle cx="262.6" cy="341.4" r="4.2" fill="none" stroke="#f07020" stroke-width="3.2"/><rect x="261.1" y="334.0" width="3" height="3.2" transform="rotate(0 262.6 341.4)" fill="#f07020"/><rect x="261.1" y="334.0" width="3" height="3.2" transform="rotate(45 262.6 341.4)" fill="#f07020"/><rect x="261.1" y="334.0" width="3" height="3.2" transform="rotate(90 262.6 341.4)" fill="#f07020"/><rect x="261.1" y="334.0" width="3" height="3.2" transform="rotate(135 262.6 341.4)" fill="#f07020"/><rect x="261.1" y="334.0" width="3" height="3.2" transform="rotate(180 262.6 341.4)" fill="#f07020"/><rect x="261.1" y="334.0" width="3" height="3.2" transform="rotate(225 262.6 341.4)" fill="#f07020"/><rect x="261.1" y="334.0" width="3" height="3.2" transform="rotate(270 262.6 341.4)" fill="#f07020"/><rect x="261.1" y="334.0" width="3" height="3.2" transform="rotate(315 262.6 341.4)" fill="#f07020"/>
<path d="M259.5,352.5 L274,338 L268,349 Z" fill="#595959"/>
<g transform="rotate(-45 265.5 345.5)"><path d="M256.6,345.5 L260.4,343.1 H272.6 V347.9 H260.4 Z" fill="#fff"/><path d="M274,343.1 H275.2 Q276.4,343.1 276.4,344.3 V346.7 Q276.4,347.9 275.2,347.9 H274 Z" fill="#fff"/></g>
<path d="M263,349 L276,336 L280,340 L267,353 Z" fill="none"/>
<rect x="254.9" y="353" width="17.2" height="2.4" fill="#f0e040"/><rect x="254.9" y="355.4" width="17.2" height="1.3" fill="#8a6a30"/>
<circle cx="293.9" cy="345.1" r="9.8" fill="#000"/><path d="M293.9,345.1 V335.3 A9.8,9.8 0 0 0 284.1,345.1 Z M293.9,345.1 V354.9 A9.8,9.8 0 0 0 303.7,345.1 Z" fill="#fff"/>
<g fill="none" stroke="#fff" stroke-width="1.2" stroke-linejoin="round"><path d="M324.2,334.1 L333.8,339.9 V350.5 L324.2,355.8 L314.4,350.5 V339.9 Z M314.4,339.9 L324.2,345.1 L333.8,339.9 M324.2,345.1 V355.8"/><path d="M324.2,334.1 V345.1 L314.4,350.5 M324.2,345.1 L333.8,350.5" stroke-dasharray="1.2 1.2" stroke-width="1"/></g>
<rect x="344" y="334.8" width="21.4" height="21.4" fill="#53585e" stroke="#ee8442" stroke-width="1.6"/>
<path d="M350.5,334.2 H358.8 V347.9 H360.8 V352.2 L354.6,356 L348.5,352.2 V347.9 H350.5 Z" fill="#fff"/>
</svg>
</div>
<div id="views"><div id="viewsel"></div>
<svg width="139" height="75" viewBox="0 847 139 75">
<path d="M8.6,871.2 H50.7 V911.6 H8.6 Z M8.6,871.2 L25.9,855.9 H64.8 L50.7,871.2 M64.8,855.9 V897.5 L50.7,911.6" fill="none" stroke="#fff" stroke-width="1.4" stroke-linejoin="round"/>
<path d="M74.5,871.6 L91.7,857.2 H130.2 L115.5,871.6 Z M74.5,876.6 H115.5 L130.2,862.2 M74.5,881.6 H115.5 L130.2,867.2 M74.5,886.6 H115.5 L130.2,872.2 M74.5,891.6 H115.5 L130.2,877.2 M74.5,896.6 H115.5 L130.2,882.2 M74.5,901.6 H115.5 L130.2,887.2 M74.5,906.6 H115.5 L130.2,892.2 M74.5,911.6 H115.5 L130.2,897.2 " fill="none" stroke="#fff" stroke-width="1.3" stroke-linejoin="round"/>
</svg></div>
<div id="warn">
<svg width="375" height="46" viewBox="1005 876 375 46">
<path d="M1025.5,886.5 L1040,911 H1011 Z" fill="none" stroke="#f26a1e" stroke-width="2.2" stroke-linejoin="round"/>
<path d="M1025.5,894.5 V903.5" stroke="#f26a1e" stroke-width="2" stroke-linecap="round"/><circle cx="1025.5" cy="907" r="1.2" fill="#f26a1e"/>
<rect x="1346.3" y="886" width="25.6" height="24.8" rx="4" fill="none" stroke="#f26a1e" stroke-width="2.1"/>
<path d="M1352.5,892 L1365.5,905 M1365.5,892 L1352.5,905" stroke="#f26a1e" stroke-width="2.6" stroke-linecap="round"/>
</svg>
<div class="t" style="left:42px;top:8px;letter-spacing:-0.38px">WARNING:</div>
<div class="t" style="left:42px;top:23px;letter-spacing:0.07px">Detected print stability issues:</div>
<div class="t" style="left:203px;top:23px;color:#ef6a1e;text-decoration:underline;letter-spacing:0.3px">[More]</div>
</div>
</div>
</body></html>
